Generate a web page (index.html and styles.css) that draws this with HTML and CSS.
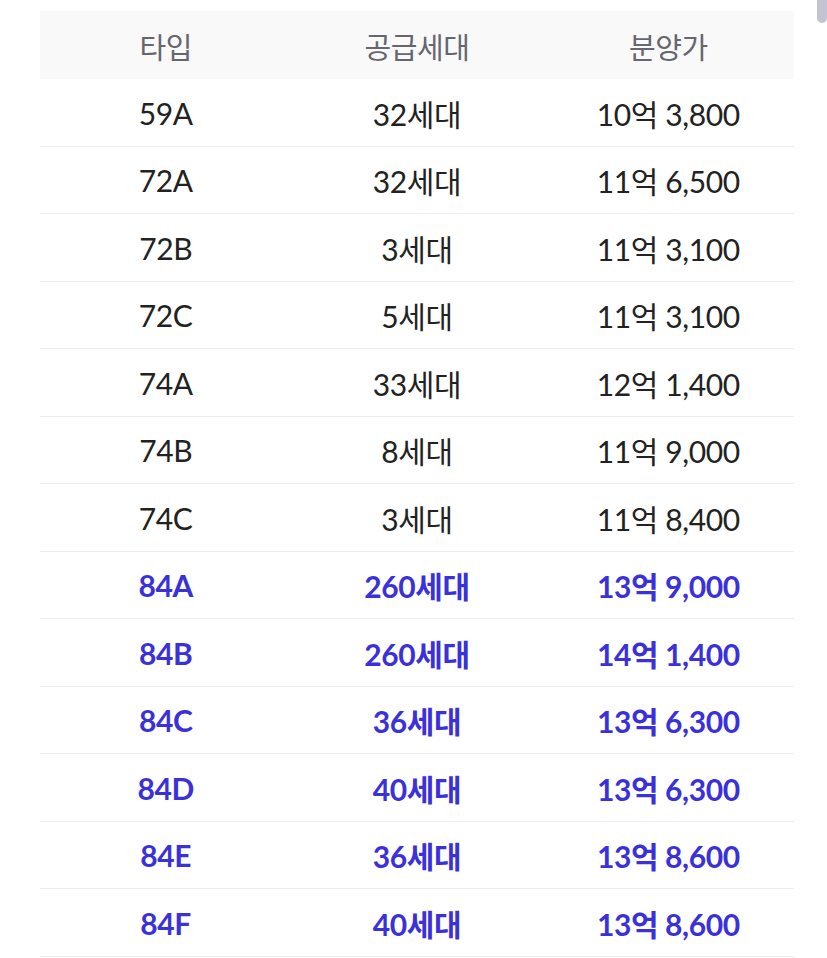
FILE: index.html
```html
<!DOCTYPE html>
<html lang="ko">
<head>
<meta charset="utf-8">
<title>분양가</title>
<link rel="stylesheet" href="styles.css">
</head>
<body>
<div class="wrap">
  <div class="table">
    <div class="row head"><div>타입</div><div>공급세대</div><div>분양가</div></div>
    <div class="row"><div>59A</div><div>32세대</div><div>10억 3,800</div></div>
    <div class="row"><div>72A</div><div>32세대</div><div>11억 6,500</div></div>
    <div class="row"><div>72B</div><div>3세대</div><div>11억 3,100</div></div>
    <div class="row"><div>72C</div><div>5세대</div><div>11억 3,100</div></div>
    <div class="row"><div>74A</div><div>33세대</div><div>12억 1,400</div></div>
    <div class="row"><div>74B</div><div>8세대</div><div>11억 9,000</div></div>
    <div class="row"><div>74C</div><div>3세대</div><div>11억 8,400</div></div>
    <div class="row hl"><div>84A</div><div>260세대</div><div>13억 9,000</div></div>
    <div class="row hl"><div>84B</div><div>260세대</div><div>14억 1,400</div></div>
    <div class="row hl"><div>84C</div><div>36세대</div><div>13억 6,300</div></div>
    <div class="row hl"><div>84D</div><div>40세대</div><div>13억 6,300</div></div>
    <div class="row hl"><div>84E</div><div>36세대</div><div>13억 8,600</div></div>
    <div class="row hl"><div>84F</div><div>40세대</div><div>13억 8,600</div></div>
  </div>
</div>
<div class="scroll-thumb"></div>
</body>
</html>
```
FILE: styles.css
```css
html, body {
  margin: 0;
  padding: 0;
  background: #ffffff;
}
body {
  font-family: Lato, "Noto Sans CJK KR", sans-serif;
  color: #222222;
}
.wrap {
  padding: 11px 0 0 40px;
}
.table {
  width: 754px;
}
.row {
  display: grid;
  grid-template-columns: repeat(3, 1fr);
  height: 66.5px;
  border-bottom: 1px solid #eeeeee;
  align-items: center;
  text-align: center;
  font-size: 30px;
  letter-spacing: -0.4px;
}
.row > div {
  padding-top: 1px;
}
.row.head {
  height: 68px;
  border-bottom: none;
  background: #f9f9f9;
  color: #666670;
  font-size: 29px;
}
.row.hl {
  color: #3b31d8;
  font-weight: 700;
}
.scroll-thumb {
  position: fixed;
  top: 0;
  right: 0;
  width: 10px;
  height: 23px;
  background: #c3c3d1;
  border-radius: 0 0 5px 5px;
}
```
